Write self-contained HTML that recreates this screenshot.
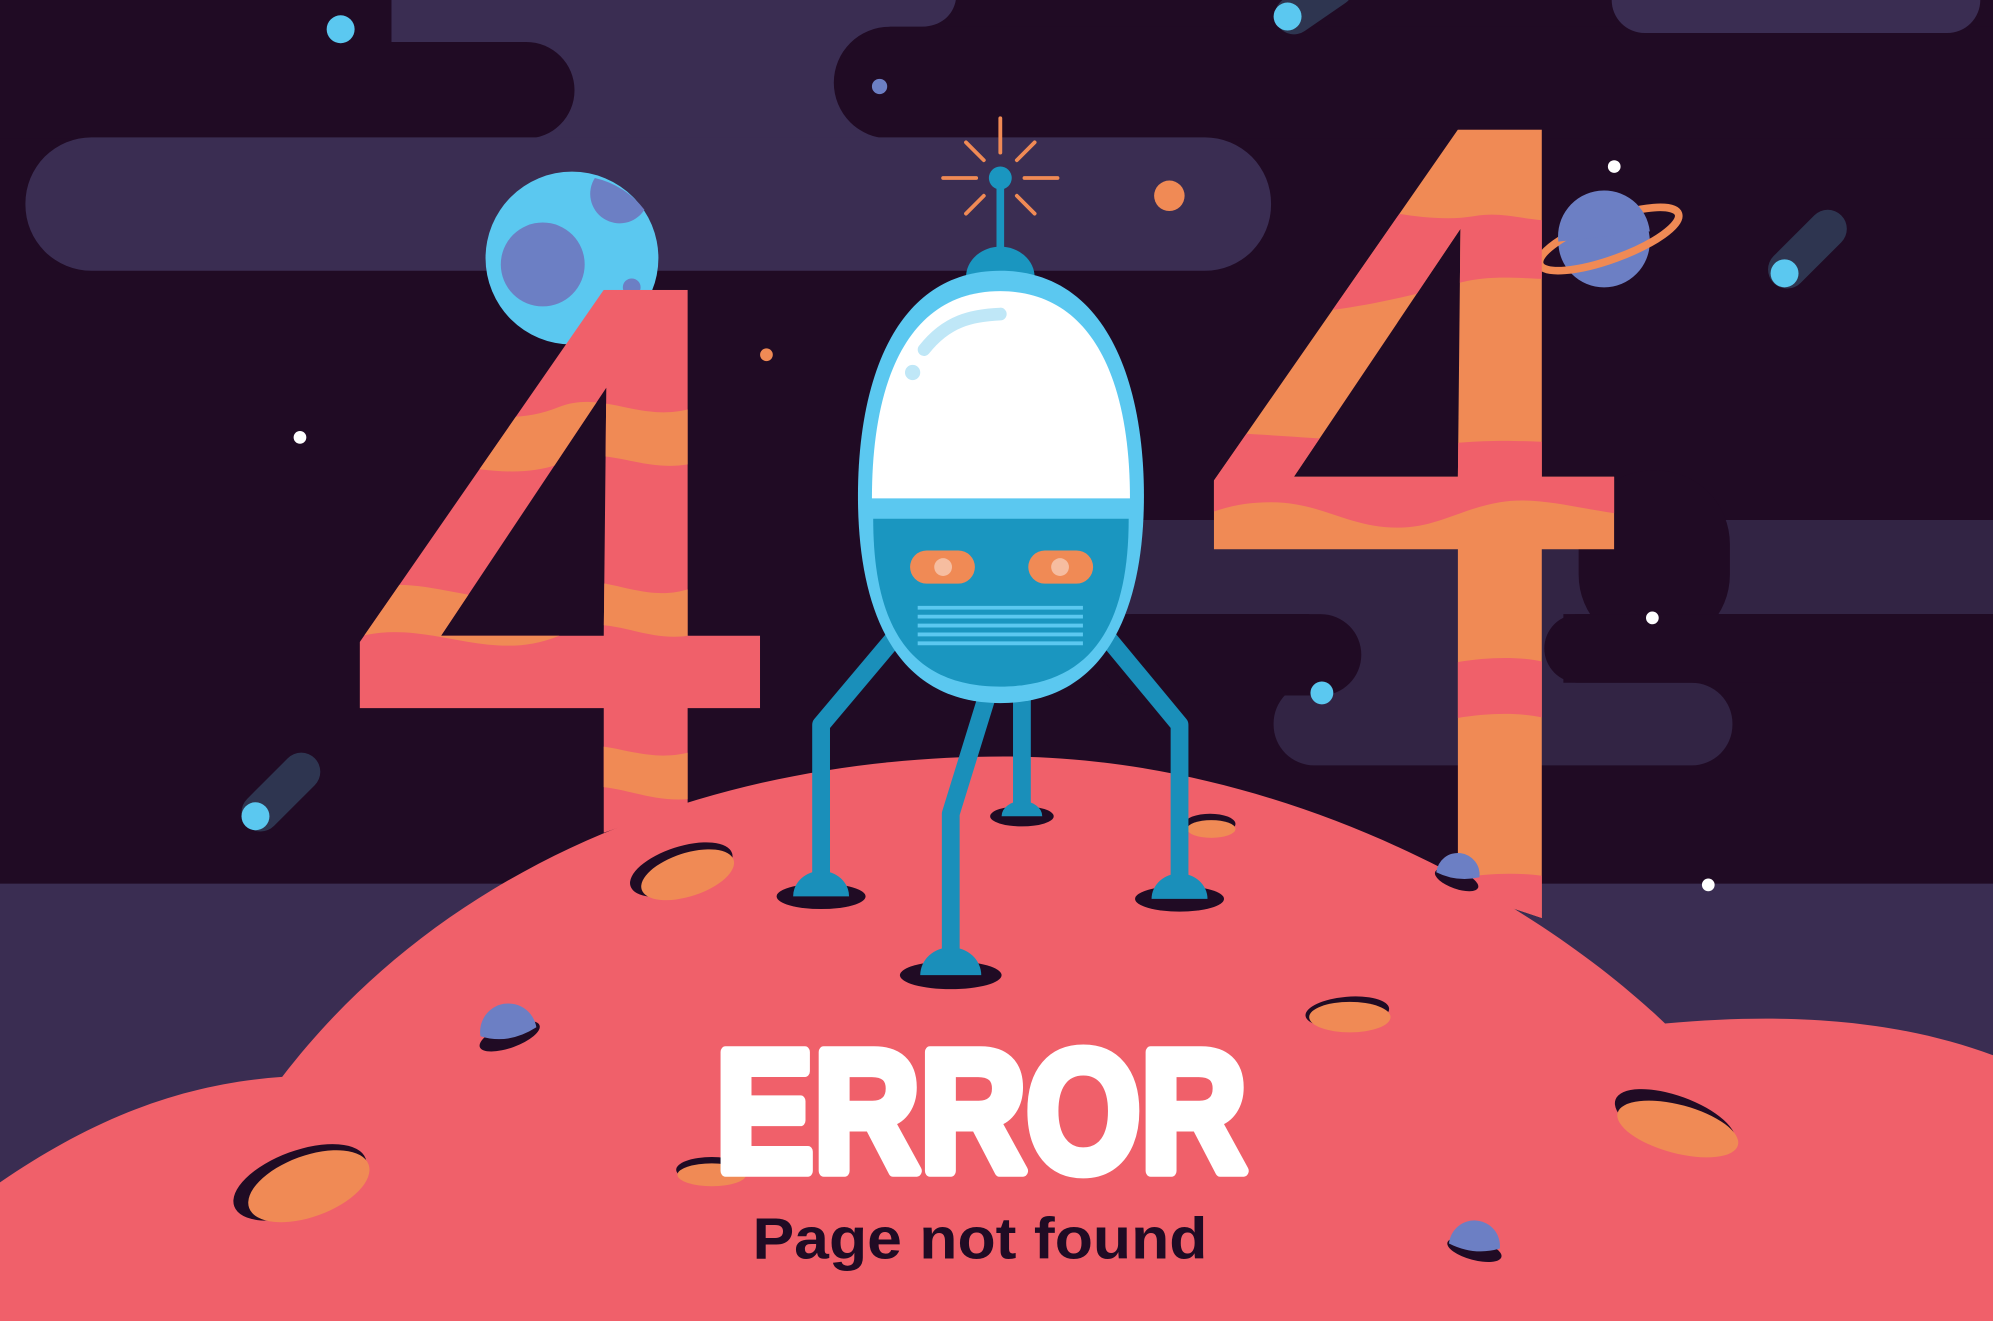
<!DOCTYPE html>
<html><head><meta charset="utf-8">
<style>
html,body{margin:0;padding:0;background:#200b24;overflow:hidden}
svg{display:block}
</style></head>
<body>
<svg width="1993" height="1321" viewBox="0 0 1568 1039" preserveAspectRatio="none" xmlns="http://www.w3.org/2000/svg">
<defs>
<clipPath id="c4a"><path fill-rule="evenodd" d="M475,228 L541,228 L541,500 L598,500 L598,557 L541,557 L541,632 L475,655 L475,557 L283,557 L283,505 Z M477,305 L347,500 L475,500 Z"/></clipPath>
<clipPath id="c4b"><path fill-rule="evenodd" d="M1147,102 L1213,102 L1213,375 L1270,375 L1270,432 L1213,432 L1213,722 L1147,700 L1147,432 L955,432 L955,378 Z M1149,180 L1018,375 L1147,375 Z"/></clipPath>
</defs>
<rect width="1568" height="1039" fill="#200b24"/>
<!-- top clouds -->
<path d="M308,0 L752,0 C750,12 740,21 725,21 L700,21 L700,109 L308,109 Z" fill="#3a2d52"/>
<rect x="-60" y="33" width="512" height="76" rx="38" fill="#200b24"/>
<rect x="656" y="21" width="1000" height="88" rx="44" fill="#200b24"/>
<rect x="20" y="108" width="980" height="105" rx="52" fill="#3a2d52"/>
<rect x="1268" y="-30" width="290" height="56" rx="26" fill="#3a2d52"/>
<!-- mid-right clouds -->
<g fill="#322444">
<rect x="880" y="409" width="700" height="74"/>
<rect x="1030" y="480" width="200" height="90"/>
<rect x="1002" y="537" width="361" height="65" rx="32"/>
</g>
<rect x="1242" y="370" width="119" height="140" rx="58" fill="#200b24"/>
<rect x="860" y="483" width="211" height="64" rx="32" fill="#200b24"/>
<rect x="1215" y="483" width="420" height="54" rx="27" fill="#200b24"/>
<rect x="0" y="695" width="1568" height="344" fill="#3a2d52"/>
<!-- moon -->
<circle cx="450" cy="203" r="68" fill="#5bc8f0"/>
<circle cx="427" cy="208" r="33" fill="#6c7fc4"/>
<path d="M468,140 A22,22 0 0 0 507,165 A68,68 0 0 0 468,140Z" fill="#6c7fc4"/>
<circle cx="497" cy="226" r="7" fill="#6c7fc4"/>
<!-- stars -->
<g fill="#fff"><circle cx="236" cy="344" r="5"/><circle cx="1270" cy="131" r="5"/><circle cx="1300" cy="486" r="5"/><circle cx="1344" cy="696" r="5"/></g>
<circle cx="268" cy="23" r="11" fill="#5bc8f0"/>
<circle cx="692" cy="68" r="6" fill="#6c7fc4"/>
<circle cx="920" cy="154" r="12" fill="#f08a55"/>
<circle cx="603" cy="279" r="5" fill="#f08a55"/>
<circle cx="1040" cy="545" r="9" fill="#5bc8f0"/>
<!-- comets -->
<g stroke="#2e3550" stroke-width="30" stroke-linecap="round"><line x1="237" y1="607" x2="205" y2="639"/><line x1="1438" y1="180" x2="1406" y2="212"/><line x1="1050" y1="-10" x2="1018" y2="12"/></g>
<circle cx="201" cy="642" r="11" fill="#5bc8f0"/><circle cx="1404" cy="215" r="11" fill="#5bc8f0"/><circle cx="1013" cy="13" r="11" fill="#5bc8f0"/>
<!-- saturn -->
<circle cx="1262" cy="190" r="36" fill="#6c7fc4"/>
<ellipse cx="1266" cy="188" rx="58" ry="16" transform="rotate(-20 1266 188)" fill="none" stroke="#f08a55" stroke-width="6"/>
<path d="M1226,190 A36,36 0 0 1 1298,182" fill="#6c7fc4"/>
<!-- 4 left -->
<g clip-path="url(#c4a)">
<rect x="270" y="220" width="340" height="450" fill="#f0606a"/>
<g fill="#f08a55">
<path d="M270,330 C330,300 380,345 440,320 C480,305 510,340 560,315 L560,360 C510,380 480,345 440,365 C380,385 330,345 270,370Z"/>
<path d="M270,470 C330,440 380,490 440,462 C480,445 510,485 560,455 L560,495 C510,515 480,475 440,500 C380,525 330,480 270,505Z"/>
<path d="M270,590 C330,570 380,610 440,590 C480,575 510,610 560,585 L560,625 C510,640 480,605 440,625 C380,645 330,610 270,630Z"/>
</g></g>
<!-- 4 right -->
<g clip-path="url(#c4b)">
<rect x="940" y="90" width="340" height="640" fill="#f08a55"/>
<g fill="#f0606a">
<path d="M940,150 C1020,140 1100,180 1160,170 C1190,165 1200,178 1280,175 L1280,222 C1200,220 1180,215 1150,222 C1100,235 1030,255 940,245Z"/>
<path d="M940,340 C1000,340 1100,352 1150,348 C1190,345 1210,348 1280,350 L1280,405 C1240,400 1210,390 1180,395 C1150,400 1130,415 1100,415 C1060,415 1040,395 1000,395 C975,395 960,400 940,408Z"/>
<path d="M1140,522 C1170,516 1200,516 1220,522 L1220,566 C1200,560 1170,560 1140,566Z"/>
<path d="M1140,692 C1170,686 1200,686 1220,690 L1220,740 L1140,740Z"/>
</g></g>
<!-- ground -->
<path d="M0,930 C80,875 150,852 222,847 C350,680 560,595 790,595 C1000,595 1200,700 1310,805 C1420,795 1500,805 1568,830 L1568,1039 L0,1039 Z" fill="#f0606a"/>
<!-- craters -->
<g>
<ellipse cx="536" cy="684" rx="42" ry="18" transform="rotate(-18 536 684)" fill="#200b24"/><ellipse cx="541" cy="688" rx="38" ry="17" transform="rotate(-18 541 688)" fill="#f08a55"/>
<ellipse cx="236" cy="930" rx="55" ry="25" transform="rotate(-20 236 930)" fill="#200b24"/><ellipse cx="243" cy="933" rx="50" ry="24" transform="rotate(-20 243 933)" fill="#f08a55"/>
<ellipse cx="1060" cy="796" rx="33" ry="12" transform="rotate(-5 1060 796)" fill="#200b24"/><ellipse cx="1062" cy="800" rx="32" ry="12" fill="#f08a55"/>
<ellipse cx="1318" cy="882" rx="50" ry="20" transform="rotate(20 1318 882)" fill="#200b24"/><ellipse cx="1320" cy="888" rx="49" ry="19" transform="rotate(15 1320 888)" fill="#f08a55"/>
<ellipse cx="560" cy="920" rx="28" ry="10" fill="#200b24"/><ellipse cx="560" cy="924" rx="27" ry="9" fill="#f08a55"/>
<ellipse cx="952" cy="648" rx="20" ry="8" fill="#200b24"/><ellipse cx="953" cy="652" rx="19" ry="7" fill="#f08a55"/>
</g>
<g>
<ellipse cx="401" cy="815" rx="25" ry="9" transform="rotate(-20 401 815)" fill="#200b24"/><path d="M378,815 A22,22 0 0 1 422,808 Q400,822 378,815Z" fill="#6c7fc4"/>
<ellipse cx="1160" cy="983" rx="22" ry="8" transform="rotate(15 1160 983)" fill="#200b24"/><path d="M1140,978 A20,20 0 0 1 1180,982 Q1160,988 1140,978Z" fill="#6c7fc4"/>
<ellipse cx="1146" cy="692" rx="18" ry="7" transform="rotate(20 1146 692)" fill="#200b24"/><path d="M1130,686 A17,17 0 0 1 1164,690 Q1146,694 1130,686Z" fill="#6c7fc4"/>
</g>
<!-- robot legs -->
<g fill="#200b24"><ellipse cx="646" cy="705" rx="35" ry="10"/><ellipse cx="928" cy="707" rx="35" ry="10"/><ellipse cx="748" cy="767" rx="40" ry="11"/><ellipse cx="804" cy="642" rx="25" ry="8"/></g>
<g fill="none" stroke="#1a8fba" stroke-width="14" stroke-linejoin="round">
<polyline points="804,540 804,635"/>
<polyline points="705,500 646,570 646,692"/>
<polyline points="870,500 928,570 928,694"/>
<polyline points="782,530 748,640 748,755"/>
</g>
<g fill="#1a8fba">
<path d="M624,705 A22,20 0 0 1 668,705Z"/><path d="M906,707 A22,20 0 0 1 950,707Z"/><path d="M724,767 A24,22 0 0 1 772,767Z"/><path d="M788,642 A16,12 0 0 1 820,642Z"/>
</g>
<!-- antenna -->
<g stroke="#f08a55" stroke-width="3" stroke-linecap="round">
<line x1="787" y1="93" x2="787" y2="120"/><line x1="742" y1="140" x2="768" y2="140"/><line x1="806" y1="140" x2="832" y2="140"/>
<line x1="760" y1="112" x2="774" y2="126"/><line x1="814" y1="112" x2="800" y2="126"/><line x1="760" y1="168" x2="774" y2="154"/><line x1="814" y1="168" x2="800" y2="154"/>
</g>
<line x1="787" y1="140" x2="787" y2="200" stroke="#1a96c0" stroke-width="6"/>
<circle cx="787" cy="140" r="9" fill="#1a96c0"/>
<path d="M760,218 A27,24 0 0 1 814,218Z" fill="#1a96c0"/>
<!-- capsule -->
<path d="M787,213 C870,213 900,300 900,390 C900,480 870,553 787,553 C704,553 675,480 675,390 C675,300 704,213 787,213Z" fill="#5bc8f0"/>
<path d="M787,229 C860,229 889,300 889,392 L686,392 C686,300 714,229 787,229Z" fill="#fff"/>
<path d="M687,408 L888,408 C888,490 860,540 787,540 C714,540 687,490 687,408Z" fill="#1a96c0"/>
<path d="M727,275 C745,252 765,248 787,247" fill="none" stroke="#bfe7f7" stroke-width="10" stroke-linecap="round"/>
<circle cx="718" cy="293" r="6" fill="#bfe7f7"/>
<rect x="716" y="433" width="51" height="26" rx="13" fill="#f08a55"/><circle cx="742" cy="446" r="7" fill="#f6bda0"/>
<rect x="809" y="433" width="51" height="26" rx="13" fill="#f08a55"/><circle cx="834" cy="446" r="7" fill="#f6bda0"/>
<g stroke="#5bc8f0" stroke-width="3"><line x1="722" y1="478" x2="852" y2="478"/><line x1="722" y1="485" x2="852" y2="485"/><line x1="722" y1="492" x2="852" y2="492"/><line x1="722" y1="499" x2="852" y2="499"/><line x1="722" y1="506" x2="852" y2="506"/></g>
<!-- text -->
<text x="563" y="921" textLength="418" lengthAdjust="spacingAndGlyphs" font-family="Liberation Sans, sans-serif" font-weight="bold" font-size="136" fill="#fff" stroke="#fff" stroke-width="9" stroke-linejoin="round">ERROR</text>
<text x="592" y="990" textLength="358" lengthAdjust="spacingAndGlyphs" font-family="Liberation Sans, sans-serif" font-weight="bold" font-size="46" fill="#200b24">Page not found</text>
</svg>
</body></html>
